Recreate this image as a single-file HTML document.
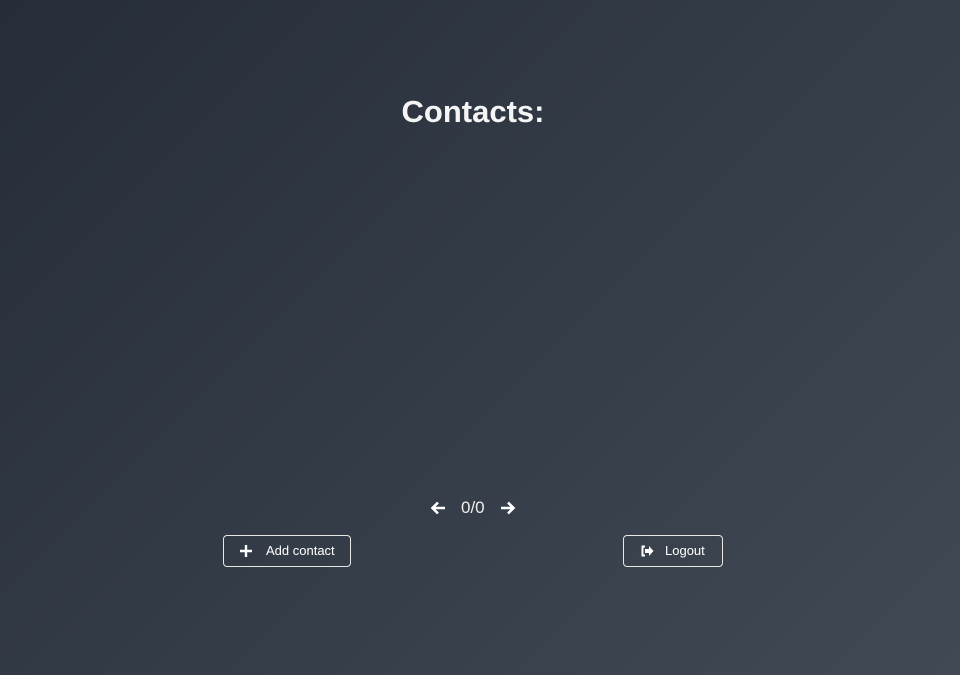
<!DOCTYPE html>
<html><head><meta charset="utf-8"><style>
html,body{margin:0;width:960px;height:675px;overflow:hidden}
body{background:linear-gradient(135deg,#262d38 0%,#323a46 45%,#414954 100%);font-family:"Liberation Sans",sans-serif;color:#fff;position:relative}
h1{position:absolute;top:94px;left:0;width:946px;text-align:center;margin:0;font-size:31px;font-weight:bold;font-family:"Liberation Sans",sans-serif;color:#f5f5f5}
.pager{position:absolute;top:497px;left:428px;width:92px;height:22px;font-size:17px;color:#eee}
.pager span{position:absolute;left:33px;top:1px}
.btn{position:absolute;top:535px;height:32px;border:1px solid #e8e8e8;border-radius:4px;box-sizing:border-box;font-size:13px;color:#fff;line-height:32px}
</style></head><body>
<h1>Contacts:</h1>
<div class="pager">
<svg style="position:absolute;left:2px;top:4px" width="16" height="14" viewBox="0 0 16 14"><path d="M15 7H3M8 1.5L2.5 7 8 12.5" stroke="#fff" stroke-width="2.6" fill="none"/></svg>
<span>0/0</span>
<svg style="position:absolute;left:72px;top:4px" width="16" height="14" viewBox="0 0 16 14"><path d="M1 7h12M8 1.5L13.5 7 8 12.5" stroke="#fff" stroke-width="2.6" fill="none"/></svg>
</div>
<div class="btn" style="left:223px;width:128px">
<svg style="position:absolute;left:16px;top:9px" width="12" height="12" viewBox="0 0 12 12"><path d="M6 0v12M0 6h12" stroke="#fff" stroke-width="2.4"/></svg>
<span style="position:absolute;left:42px;top:-1px">Add contact</span></div>
<div class="btn" style="left:623px;width:100px">
<svg style="position:absolute;left:16px;top:9px" width="14" height="12" viewBox="0 0 14 12"><path d="M5 1.5H2.5v9H5" stroke="#fff" stroke-width="2" fill="none"/><path d="M5 4h4V1l4.5 5L9 11V8H5z" fill="#fff"/></svg>
<span style="position:absolute;left:41px;top:-1px">Logout</span></div>
</body></html>
